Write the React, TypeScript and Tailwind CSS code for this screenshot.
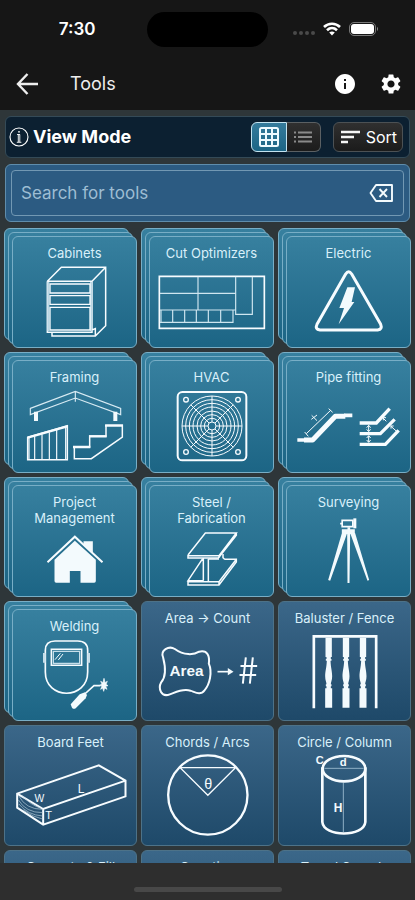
import type { ReactNode } from "react";
import { MdInfo, MdSettings } from "react-icons/md";

type ArtProps = { w: number; h: number; box: string; children: ReactNode };

function Art({ w, h, box, children }: ArtProps) {
  return (
    <svg
      width={w}
      height={h}
      viewBox={box}
      fill="none"
      stroke="#f7fcff"
      strokeWidth="4.500"
      aria-hidden="true"
      className="shrink-0"
    >
      {children}
    </svg>
  );
}

const textProps = {
  fill: "#f3fafd",
  stroke: "none",
  fontFamily: '"Liberation Sans", Arial, sans-serif',
};

function CabinetArt() {
  return (
    <Art w={64} h={72} box="127 126 192 216">
      <path d="M140 172 182 130H315V305L284 336H154V325M140 172H274L315 130M274 172V325H140V172M274 318 284 314V336" strokeWidth="4.500" />
      <path d="M143 174V322M271 174V322" stroke="#b9d6e3" strokeWidth="6" />
      <path d="M148 180H268V207H148ZM148 215H268V241H148ZM148 250H268V318H148Z" strokeWidth="4" />
    </Art>
  );
}

function CutArt() {
  return (
    <Art w={108} h={56} box="472 150 324 168">
      <path d="M476 157H791V313H476Z" strokeWidth="5" />
      <path
        d="M478 208H705M592 158V258M478 258H705M705 158V271H755V158M478 295H697V258M481 258V295M516 258V295M552 258V295M587 258V295M623 258V295M660 258V295"
        stroke="#cfe6f0"
        strokeWidth="3.500"
      />
    </Art>
  );
}

function ElectricArt() {
  return (
    <Art w={72} h={64} box="322 138 216 192">
      <path d="M420 150Q429 137 438 150L525 301Q531 316 516 318H343Q327 316 334 301Z" strokeWidth="9" strokeLinejoin="round" />
      <path d="M425 190H448L438 234H446L399 301L415 252H401Z" fill="#f3fafd" stroke="none" />
    </Art>
  );
}

function FramingArt() {
  return (
    <Art w={100} h={72} box="75 123 300 216">
      <path d="M91 178 226 127 362 178V197L226 147 91 197ZM226 127V158" strokeWidth="3.500" stroke="#d8ebf3" />
      <path d="M102 188H114V216H102ZM340 188H352V216H340Z" fill="#f3fafd" stroke="none" />
      <path d="M83 265V332H202V230Z" />
      <path d="M83 266 202 232" strokeWidth="7" />
      <path d="M87 264V332M104 262V332M126 256V332M148 250V332M170 243V332M197 236V332" strokeWidth="3.500" />
      <path d="M223 295V329H274L367 264V229H318V261H269V294Z" />
      <path d="M219 294H271M267 262H320M315 230H369" strokeWidth="7" />
    </Art>
  );
}

function HvacArt() {
  return (
    <Art w={72} h={72} box="526 125 216 216">
      <rect x="531" y="131" width="206" height="205" rx="14" strokeWidth="6" />
      {[12, 23, 34, 45, 57, 68, 79, 90].map((r) => (
        <circle key={r} cx="634" cy="233" r={r} strokeWidth="3" />
      ))}
      <path d="M544 233H622M646 233H724M634 143V221M634 245V323M570 169 625 224M643 242 698 297M698 169 643 224M625 242 570 297" strokeWidth="3" />
      {[556, 712].map((x) => [154, 311].map((y) => <circle key={`${x}-${y}`} cx={x} cy={y} r="7" strokeWidth="4" />))}
    </Art>
  );
}

function PipeArt() {
  return (
    <Art w={104} h={44} box="275 165 312 132">
      <path d="M276 273H300M416 199H441" strokeWidth="11" />
      <path d="M296 273H322L390 202H420" strokeWidth="15" strokeLinejoin="round" />
      <path d="M303 254 376 184M298 249 309 262M370 179 382 190M319 199 335 215M318 211 335 198" strokeWidth="3" />
      <path d="M463 222H513L553 179M463 254H525L568 211M463 286H540L580 244" strokeWidth="10" />
      <path d="M490 229V247M490 261V279M484 236 490 229 496 236M484 241 490 248 496 241M484 267 490 260 496 267M484 273 490 280 496 273M532 206 543 217M556 231 576 249M534 214V206H542M557 239V231H565" strokeWidth="3" />
    </Art>
  );
}

function HouseArt() {
  return (
    <Art w={60} h={52} box="133.500 177 180 156">
      <path d="M162 257 223 200 286 257V321Q286 326 281 326H240V291H208V326H167Q162 326 162 321ZM249 202H277V236L249 211Z" fill="#f3fafd" stroke="none" />
      <path d="M141 265 223 188 306 265" strokeWidth="6" />
    </Art>
  );
}

function SteelArt() {
  return (
    <Art w={56} h={56} box="550 171 168 168">
      <path d="M562 243 614 177H707L655 245H562V252H653L707 184V177M655 245V252" />
      <path d="M606 254 562 320H608M608 252V320M623 255V323M562 320V333H655L707 264V256H672M562 323H655L707 256M655 323V333M623 255H655M667 240V251L672 256" />
    </Art>
  );
}

function SurveyArt() {
  return (
    <Art w={44} h={68} box="364.500 129 132 204">
      <path d="M410 139H442V158H410ZM404 149H410" strokeWidth="5" />
      <path d="M448 133V163" strokeWidth="9" />
      <path d="M426 160H434V166H448V180H409V166H426ZM409 178 424 180 374 320 368 318ZM425 178H434L432 327H426ZM435 180 449 178 491 318 486 320Z" fill="#f3fafd" stroke="none" />
    </Art>
  );
}

function WeldingArt() {
  return (
    <Art w={70} h={72} box="121 126 210 216">
      <path d="M137 160Q137 132 166 132H234Q264 132 264 160V225C264 310 137 310 137 225Z" strokeWidth="5" />
      <path d="M134 168V197M267 168V197" stroke="#c6deea" strokeWidth="8" />
      <path d="M155 157H246V205H155Z" />
      <path d="M161 163H240V199H161Z" stroke="#c6deea" strokeWidth="4" />
      <path d="M166 188 182 169M176 189 190 171" strokeWidth="3" />
      <path d="M252 294 283 266H302" strokeWidth="5" />
      <path d="M213 322 240 292 256 286 262 294 258 304 228 334Q222 338 217 332Z" fill="#f3fafd" stroke="none" />
      <path d="M313 244 316 257 323 253 319 262 325 266 318 268 322 277 315 273 312 283 309 273 303 277 307 267 300 265 307 261 303 253 310 257Z" strokeWidth="2" fill="#f3fafd" />
    </Art>
  );
}

function AreaArt() {
  return (
    <Art w={104} h={56} box="466.500 138 312 168">
      <path d="M488 182C478 160 505 145 523 156C550 176 580 174 596 164C622 158 628 178 625 200C636 225 628 262 612 280C600 296 585 286 570 281C545 274 525 286 508 292C482 302 472 275 482 256C500 235 494 205 488 182Z" strokeWidth="6" />
      <text x="507" y="238" fontSize="46" fontWeight="700" {...textProps}>Area</text>
      <path d="M651 224H686" strokeWidth="5" />
      <path d="M682 213 699 224 682 235Z" fill="#f3fafd" stroke="none" />
      <path d="M736 181 727 260M757 181 748 260M720 207H770M717 234H767" strokeWidth="6" />
    </Art>
  );
}

const spindle =
  "M-10 122H9V180H6V186H8V191H5C6 212 10 222 10 238C10 250 6 256 6 262H8V268H6V274H10V332H-11V274H-7V268H-9V262H-7C-7 256 -11 250 -11 238C-11 222 -7 212 -6 191H-9V186H-7V180H-10Z";

function BalusterArt() {
  return (
    <Art w={68} h={76} box="316.500 108 204 228">
      <path d="M325 334V118H512V334" strokeWidth="8" />
      {[370, 422, 473].map((x) => (
        <path key={x} d={spindle} transform={`translate(${x} 0)`} fill="#f3fafd" stroke="none" />
      ))}
    </Art>
  );
}

function BoardArt() {
  return (
    <Art w={114} h={64} box="40.500 129 342 192">
      <path d="M50 221 295 136 375 182V229L128 314 50 263ZM50 221 128 267 375 182M128 267V314" strokeWidth="6" />
      <path d="M55 228Q76 268 126 268M54 240Q76 278 126 278M55 252Q82 285 126 288M64 226Q90 255 120 264M68 270Q98 292 126 297" strokeWidth="2" stroke="#b5cddd" />
      <text x="102" y="246" fontSize="31" {...textProps}>W</text>
      <text x="232" y="219" fontSize="36" {...textProps}>L</text>
      <text x="134" y="298" fontSize="33" {...textProps}>T</text>
    </Art>
  );
}

function ChordArt() {
  return (
    <Art w={84} h={84} box="496.500 99 252 252">
      <circle cx="622" cy="225" r="119" strokeWidth="7" />
      <path d="M539 143H705L622 226Z" strokeWidth="4" />
      <text x="611" y="206" fontSize="43" {...textProps}>θ</text>
    </Art>
  );
}

function CylinderArt() {
  return (
    <Art w={64} h={84} box="940 99 192 252">
      <path d="M974 145H1092M1031 188V336" stroke="#8fb0c6" strokeWidth="3" />
      <ellipse cx="1033" cy="146" rx="64" ry="38" strokeWidth="8" />
      <path d="M968 142V306C972 352 1093 352 1097 306V142" strokeWidth="8" />
      <g {...textProps} fontWeight="700">
        <text x="948" y="132" fontSize="33">C</text>
        <text x="1020" y="139" fontSize="34">d</text>
        <text x="1002" y="276" fontSize="36">H</text>
      </g>
    </Art>
  );
}

type Tool = { name: string; art?: ReactNode; group?: boolean };

const tools: Tool[] = [
  { name: "Cabinets", art: <CabinetArt />, group: true },
  { name: "Cut Optimizers", art: <CutArt />, group: true },
  { name: "Electric", art: <ElectricArt />, group: true },
  { name: "Framing", art: <FramingArt />, group: true },
  { name: "HVAC", art: <HvacArt />, group: true },
  { name: "Pipe fitting", art: <PipeArt />, group: true },
  { name: "Project Management", art: <HouseArt />, group: true },
  { name: "Steel / Fabrication", art: <SteelArt />, group: true },
  { name: "Surveying", art: <SurveyArt />, group: true },
  { name: "Welding", art: <WeldingArt />, group: true },
  { name: "Area → Count", art: <AreaArt /> },
  { name: "Baluster / Fence", art: <BalusterArt /> },
  { name: "Board Feet", art: <BoardArt /> },
  { name: "Chords / Arcs", art: <ChordArt /> },
  { name: "Circle / Column", art: <CylinderArt /> },
  { name: "Concrete & Fill" },
  { name: "Counting" },
  { name: "Travel Speeds" },
];

const sheet = "rounded-md border border-[#78aec6] bg-linear-to-b from-[#37809f] to-[#1c6585]";

function Face({ tool, className }: { tool: Tool; className: string }) {
  return (
    <span className={`flex h-full w-full flex-col items-center px-2 pt-2 ${className}`}>
      <span className="text-center text-[13px] leading-4 text-[#d9f0fa]">{tool.name}</span>
      <span className="flex min-h-0 flex-1 items-center justify-center pb-1">{tool.art}</span>
    </span>
  );
}

function Tile({ tool }: { tool: Tool }) {
  if (!tool.group) {
    return (
      <button type="button" className="block aspect-[21/19] w-full">
        <Face tool={tool} className="rounded-md border border-[#4d7288] bg-linear-to-b from-[#3b6789] to-[#1e4969]" />
      </button>
    );
  }
  return (
    <button type="button" className="relative block aspect-[21/19] w-full pt-2 pl-2">
      <span className={`absolute top-0 right-2 bottom-2 left-0 ${sheet}`} />
      <span className={`absolute top-1 right-1 bottom-1 left-1 ${sheet}`} />
      <span className="relative block h-full w-full">
        <Face tool={tool} className={sheet} />
      </span>
    </button>
  );
}

function StatusBar() {
  return (
    <div className="grid h-[58px] grid-cols-3 items-center">
      <span className="pl-4 text-center text-[17px] leading-5 font-semibold">7:30</span>
      <span className="mx-auto h-[35px] w-[121px] rounded-full bg-black" />
      <span className="flex items-center justify-end gap-2 pr-9">
        <span className="flex gap-[2px] pt-2">
          {[0, 1, 2, 3].map((n) => (
            <span key={n} className="size-1 rounded-full bg-[#4a4a4a]" />
          ))}
        </span>
        <svg width="18" height="14" viewBox="0 0 18 14" fill="none" stroke="#fff" strokeWidth="2.600" aria-hidden="true">
          <path d="M1 5C5.500 .6 12.500 .6 17 5M4 8.200C7 5.400 11 5.400 14 8.200" />
          <path d="M9 13.500 6.200 10.600Q9 8.400 11.800 10.600Z" fill="#fff" stroke="none" />
        </svg>
        <svg width="30" height="14" viewBox="0 0 30 14" fill="none" aria-hidden="true">
          <rect x=".5" y=".5" width="26" height="13" rx="4.500" stroke="#777" />
          <rect x="2" y="2" width="23" height="10" rx="3" fill="#fff" />
          <path d="M28 4.800Q30 7 28 9.200Z" fill="#888" />
        </svg>
      </span>
    </div>
  );
}

export default function App() {
  return (
    <div className="flex h-screen flex-col bg-[#2e3639] font-['Inter','Liberation_Sans',sans-serif] text-white">
      <header className="shrink-0 bg-[#161616]">
        <StatusBar />
        <div className="flex h-[52px] items-center pr-3 pl-4">
          <button type="button" aria-label="Back">
            <svg width="24" height="24" viewBox="0 0 24 24" fill="none" stroke="#eee" strokeWidth="2.400" aria-hidden="true">
              <path d="M22 12H2.500M11.500 2 2 12 11.500 22" />
            </svg>
          </button>
          <h1 className="ml-[30px] flex-1 text-lg leading-6 text-[#eee]">Tools</h1>
          <button type="button" aria-label="Information">
            <MdInfo size={24} />
          </button>
          <button type="button" aria-label="Settings" className="ml-[22px]">
            <MdSettings size={24} />
          </button>
        </div>
      </header>

      <main className="min-h-0 flex-1 overflow-y-auto pt-[6px] [scrollbar-width:none]">
        <div className="flex flex-col gap-[6px] px-[5px]">
          <section className="flex h-[42px] items-center rounded-md border border-[#344a57] bg-[#0c2031] pr-[6px] pl-[3px]">
            <button type="button" className="flex items-center gap-1 text-lg leading-6 font-bold">
              <svg width="20" height="20" viewBox="0 0 20 20" fill="none" stroke="#fff" aria-hidden="true">
                <circle cx="10" cy="10" r="9" strokeWidth="1.100" />
                <path d="M8 7.500H9.300V15M10.800 7.500V15M7.800 15.300H12.400M9 7.500H11" strokeWidth=".9" />
                <circle cx="10" cy="4.800" r=".9" fill="#fff" stroke="none" />
              </svg>
              View Mode
            </button>
            <div className="ml-auto flex h-[30px] w-[70px]">
              <button
                type="button"
                aria-label="Grid view"
                className="flex flex-1 items-center justify-center rounded-l-md border border-[#c3e3f0] bg-linear-to-b from-[#347b9c] to-[#1c6585]"
              >
                <svg width="20" height="20" viewBox="0 0 20 20" fill="none" stroke="#eefaff" strokeWidth="2" aria-hidden="true">
                  <rect x="1" y="1" width="18" height="18" rx="1.500" />
                  <path d="M7 1V19M13 1V19M1 7H19M1 13H19" />
                </svg>
              </button>
              <button
                type="button"
                aria-label="List view"
                className="flex flex-1 items-center justify-center rounded-r-md border border-l-0 border-[#5b6063] bg-linear-to-b from-[#303030] to-[#1c1c1c]"
              >
                <svg width="18" height="12" viewBox="0 0 18 12" fill="none" stroke="#8a8a8a" strokeWidth="1.800" aria-hidden="true">
                  <path d="M0 1.500H2M4 1.500H18M0 6H2M4 6H18M0 10.500H2M4 10.500H18" />
                </svg>
              </button>
            </div>
            <button
              type="button"
              className="ml-3 flex h-[30px] w-[70px] items-center justify-between rounded-md border border-[#4c5154] bg-linear-to-b from-[#303030] to-[#1b1b1b] pr-[5px] pl-[7px] text-base leading-5"
            >
              <svg width="19" height="14" viewBox="0 0 19 14" stroke="#f5f5f5" strokeWidth="2.400" aria-hidden="true">
                <path d="M0 2H19M0 7H13M0 12H7" />
              </svg>
              Sort
            </button>
          </section>

          <div className="rounded-md border border-[#5f8dac] bg-[#2c5b82] p-[5px]">
            <div className="flex h-[46px] items-center rounded border border-[#7298b3] pr-[9px] pl-[9px]">
              <input
                type="text"
                aria-label="Search for tools"
                placeholder="Search for tools"
                className="min-w-0 flex-1 bg-transparent text-[17px] leading-6 outline-none placeholder:text-[#9ebdd3]"
              />
              <button type="button" aria-label="Clear search">
                <svg width="26" height="20" viewBox="0 0 26 20" fill="none" stroke="#f3fafd" strokeWidth="1.900" aria-hidden="true">
                  <path d="M8 2H24V18H8L2.500 10Z" strokeLinejoin="round" />
                  <path d="M11.500 6 19 14M19 6 11.500 14" />
                </svg>
              </button>
            </div>
          </div>
        </div>

        <div className="mt-[6px] grid grid-cols-3 gap-1 px-1 pb-1">
          {tools.map((tool) => (
            <Tile key={tool.name} tool={tool} />
          ))}
        </div>
      </main>

      <footer className="flex h-[37px] shrink-0 items-center justify-center bg-[#2e2e2e] pt-4">
        <span className="h-[5px] w-[148px] rounded-full bg-[#484848]" />
      </footer>
    </div>
  );
}
